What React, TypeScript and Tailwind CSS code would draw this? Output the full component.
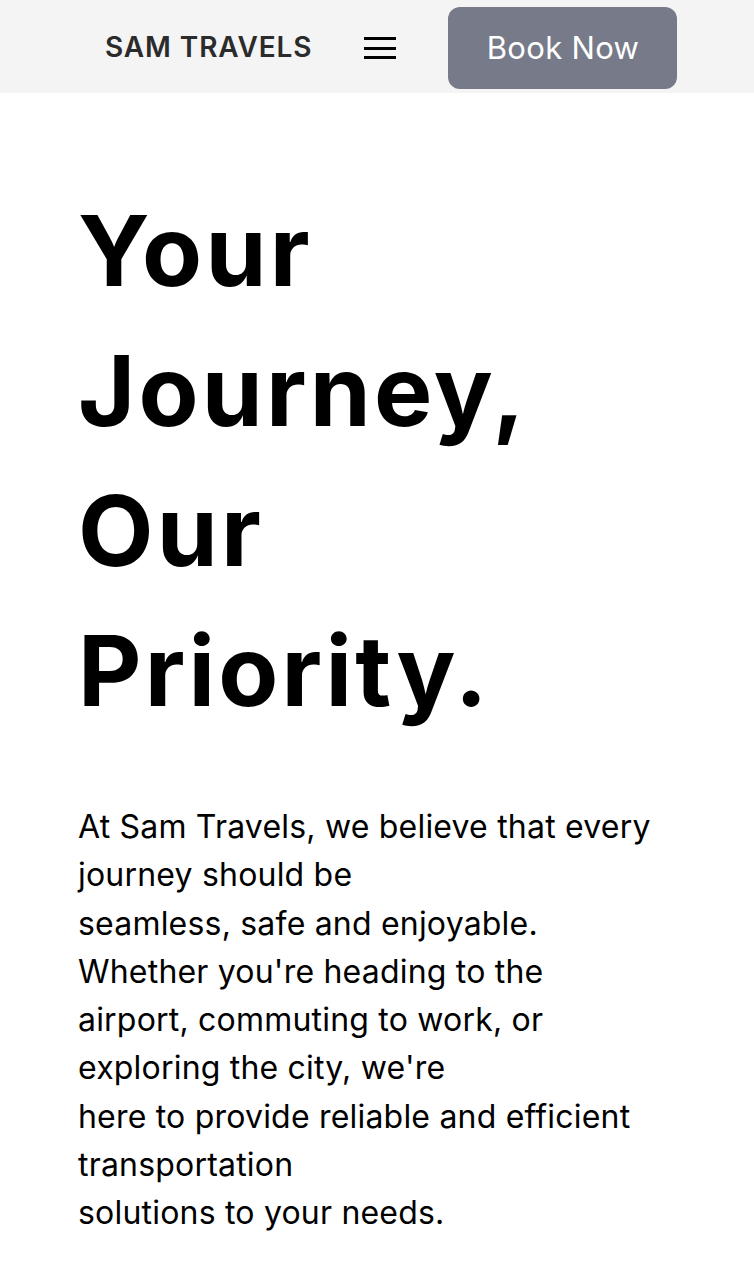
const lines = [
    "At Sam Travels, we believe that every",
    "journey should be",
    "seamless, safe and enjoyable.",
    "Whether you're heading to the",
    "airport, commuting to work, or",
    "exploring the city, we're",
    "here to provide reliable and efficient",
    "transportation",
    "solutions to your needs.",
];

const App = () => {
    return (
        <div className="min-h-[1280px] bg-white font-['Inter','Open_Sans',sans-serif] text-black">
            <header className="h-[93px] bg-[#f4f4f4] flex items-start">
                <div className="ml-[105px] mt-[28px] text-[28px] leading-[38px] font-semibold text-[#2b2b2b] tracking-[0.9px]">SAM TRAVELS</div>
                <button className="ml-[52px] mt-[37px] w-[32px] h-[22px] flex flex-col justify-between">
                    <span className="block h-[3px] bg-black"></span>
                    <span className="block h-[3px] bg-black"></span>
                    <span className="block h-[3px] bg-black"></span>
                </button>
                <button className="ml-[52px] mt-[7px] w-[229px] h-[82px] rounded-xl bg-[#767a89] text-white text-[31px] font-normal tracking-[0.3px]">
                    Book Now
                </button>
            </header>
            <main className="px-[78px]">
                <h1 className="mt-[88px] text-[98px] leading-[140px] font-bold tracking-[3.2px]">
                    Your<br />Journey,<br />Our<br />Priority.
                </h1>
                <p className="mt-[62px] text-[32px] leading-[48.3px] tracking-[0.2px]">
                    {lines.map((l, i) => (
                        <span key={i} className="block whitespace-nowrap">{l}</span>
                    ))}
                </p>
            </main>
        </div>
    );
};
export default App;
